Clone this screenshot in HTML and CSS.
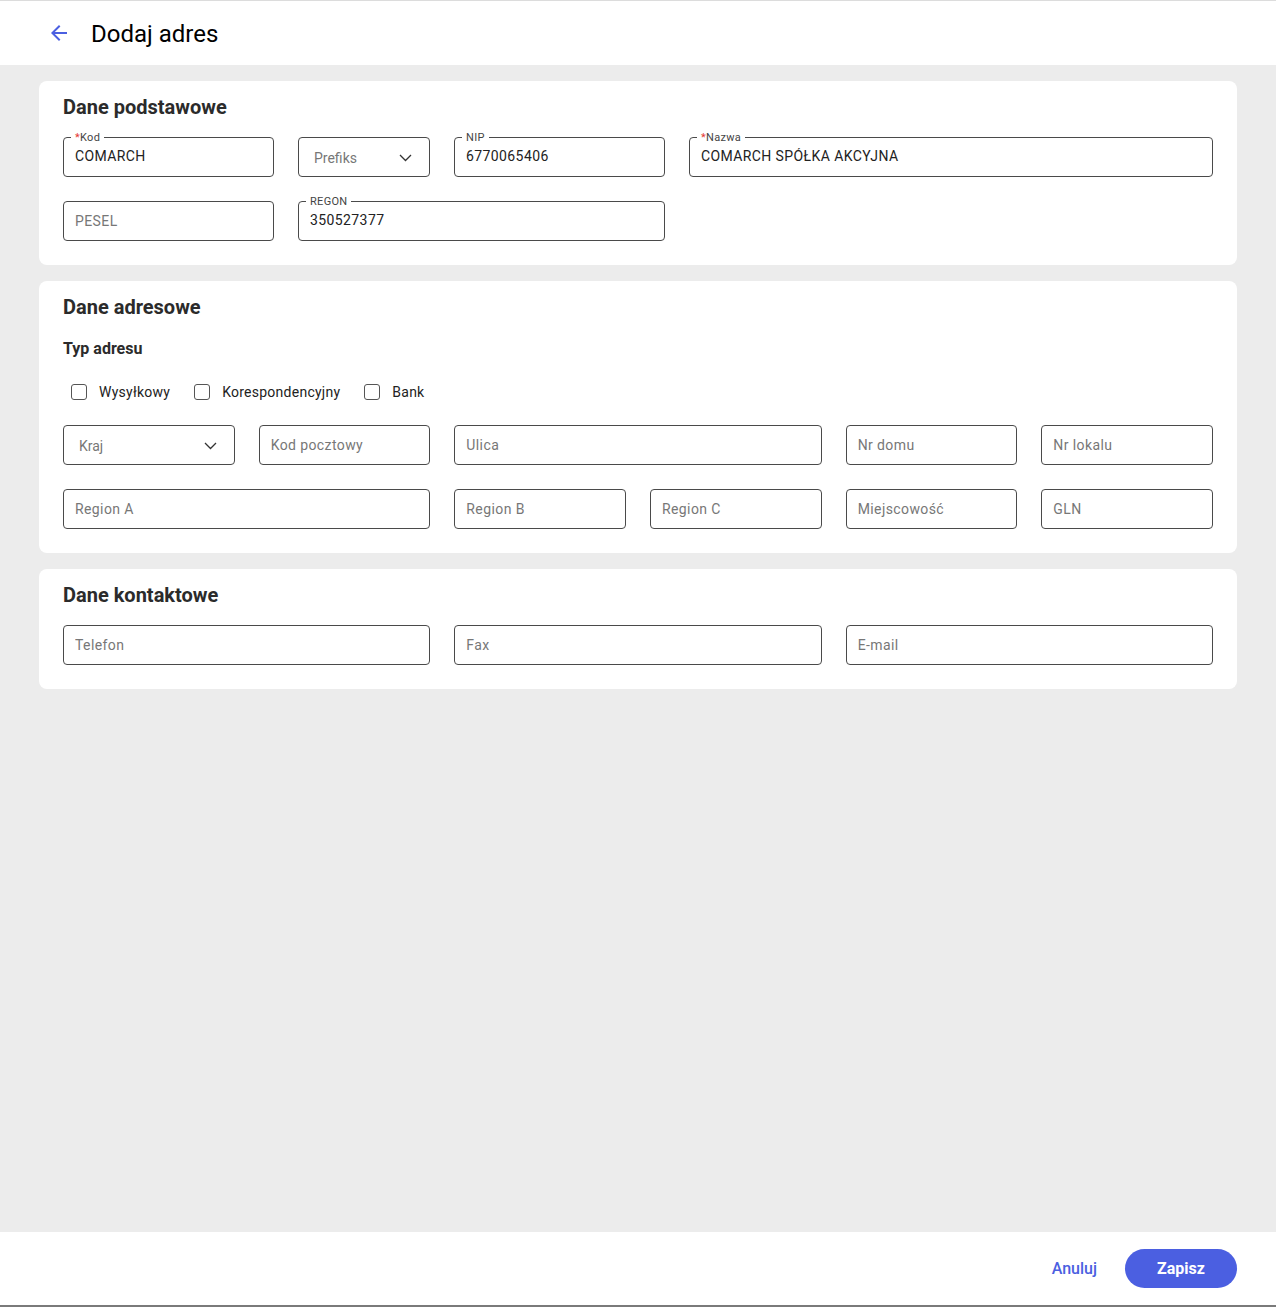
FILE: index.html
```html
<!DOCTYPE html>
<html>
<head>
  <meta charset="UTF-8">
  <title>Dodaj adres</title>
  <link rel="stylesheet" href="styles.css">
</head>
<body>
  <div class="page">
    <header class="topbar">
      <button class="back" aria-label="Wstecz">
        <svg width="24" height="24" viewBox="0 0 24 24"><path d="M20 11H7.83l5.59-5.59L12 4l-8 8 8 8 1.41-1.41L7.83 13H20v-2z" fill="#4b5fe1"/></svg>
      </button>
      <h1>Dodaj adres</h1>
    </header>

    <main class="content">
      <section class="card">
        <h2>Dane podstawowe</h2>
        <div class="grid basic">
          <div class="field">
            <span class="legend"><i>*</i>Kod</span>
            <input type="text" value="COMARCH">
          </div>
          <div class="field select">
            <span class="ph">Prefiks</span>
            <svg width="13" height="8" viewBox="0 0 13 8"><path d="M1 1l5.5 5.5L12 1" fill="none" stroke="#333" stroke-width="1.3"/></svg>
          </div>
          <div class="field">
            <span class="legend">NIP</span>
            <input type="text" value="6770065406">
          </div>
          <div class="field">
            <span class="legend"><i>*</i>Nazwa</span>
            <input type="text" value="COMARCH SPÓŁKA AKCYJNA">
          </div>
          <div class="field">
            <input type="text" placeholder="PESEL">
          </div>
          <div class="field regon">
            <span class="legend">REGON</span>
            <input type="text" value="350527377">
          </div>
        </div>
      </section>

      <section class="card">
        <h2>Dane adresowe</h2>
        <h3>Typ adresu</h3>
        <div class="checks">
          <label class="check"><span class="box"></span>Wysyłkowy</label>
          <label class="check"><span class="box"></span>Korespondencyjny</label>
          <label class="check"><span class="box"></span>Bank</label>
        </div>
        <div class="grid cols12">
          <div class="field select span2">
            <span class="ph">Kraj</span>
            <svg width="13" height="8" viewBox="0 0 13 8"><path d="M1 1l5.5 5.5L12 1" fill="none" stroke="#333" stroke-width="1.3"/></svg>
          </div>
          <div class="field span2"><input type="text" placeholder="Kod pocztowy"></div>
          <div class="field span4"><input type="text" placeholder="Ulica"></div>
          <div class="field span2"><input type="text" placeholder="Nr domu"></div>
          <div class="field span2"><input type="text" placeholder="Nr lokalu"></div>
          <div class="field span4"><input type="text" placeholder="Region A"></div>
          <div class="field span2"><input type="text" placeholder="Region B"></div>
          <div class="field span2"><input type="text" placeholder="Region C"></div>
          <div class="field span2"><input type="text" placeholder="Miejscowość"></div>
          <div class="field span2"><input type="text" placeholder="GLN"></div>
        </div>
      </section>

      <section class="card">
        <h2>Dane kontaktowe</h2>
        <div class="grid cols12">
          <div class="field span4"><input type="text" placeholder="Telefon"></div>
          <div class="field span4"><input type="text" placeholder="Fax"></div>
          <div class="field span4"><input type="text" placeholder="E-mail"></div>
        </div>
      </section>
    </main>

    <footer class="actions">
      <button class="cancel">Anuluj</button>
      <button class="save">Zapisz</button>
    </footer>
  </div>
</body>
</html>
```

FILE: styles.css
```css
* {
  box-sizing: border-box;
}
body {
  margin: 0;
  font-family: Roboto, "Noto Sans", sans-serif;
  color: #222;
}
.page {
  height: 100vh;
  display: flex;
  flex-direction: column;
  border-top: 1px solid #dcdcdc;
  border-bottom: 2px solid #7a7a7a;
}
.topbar {
  height: 64px;
  flex: none;
  display: flex;
  align-items: center;
  padding-left: 47px;
  background: #fff;
}
.back {
  border: none;
  background: none;
  padding: 0;
  width: 24px;
  height: 24px;
  cursor: pointer;
}
.topbar h1 {
  margin: 2px 0 0 20px;
  font-size: 24px;
  font-weight: 400;
  color: #000;
}
.content {
  flex: 1;
  background: #ececec;
  padding: 16px 39px;
  display: flex;
  flex-direction: column;
  gap: 16px;
}
.card {
  background: #fff;
  border-radius: 8px;
  padding: 14px 24px 24px;
}
.card h2 {
  margin: 0 0 18px;
  font-size: 20px;
  line-height: 24px;
  font-weight: 700;
  color: #2b2b2b;
}
.card h3 {
  margin: 0;
  font-size: 16px;
  line-height: 24px;
  font-weight: 700;
  color: #2b2b2b;
}
.checks {
  display: flex;
  gap: 24px;
  height: 26px;
  align-items: center;
  margin: 18px 0 20px;
  padding-left: 8px;
}
.check {
  display: flex;
  align-items: center;
  gap: 12px;
  font-size: 14px;
  letter-spacing: 0.25px;
  color: #222;
  cursor: pointer;
}
.box {
  width: 16px;
  height: 16px;
  border: 1px solid #555;
  border-radius: 3px;
}
.grid {
  display: grid;
  gap: 24px;
}
.basic {
  grid-template-columns: 211px 132px 211px 1fr;
}
.regon {
  grid-column: span 2;
}
.cols12 {
  grid-template-columns: repeat(12, 1fr);
}
.span2 {
  grid-column: span 2;
}
.span4 {
  grid-column: span 4;
}
.field {
  position: relative;
  height: 40px;
  border: 1px solid #4a4a4a;
  border-radius: 4px;
}
.field input {
  width: 100%;
  height: 100%;
  border: none;
  outline: none;
  background: transparent;
  padding: 0 11px;
  font-family: inherit;
  font-size: 14px;
  letter-spacing: 0.4px;
  color: #222;
}
.field .legend + input {
  padding-bottom: 2px;
}
.field input::placeholder {
  color: #777;
}
.legend {
  position: absolute;
  top: -6px;
  left: 7px;
  padding: 0 4px;
  background: #fff;
  font-size: 11px;
  line-height: 12px;
  letter-spacing: 0.3px;
  color: #444;
}
.legend i {
  font-style: normal;
  color: #e53935;
}
.select {
  display: flex;
  align-items: center;
  justify-content: space-between;
  padding: 2px 17px 0 15px;
}
.ph {
  font-size: 14px;
  color: #777;
}
.actions {
  height: 73px;
  flex: none;
  background: #fff;
  display: flex;
  justify-content: flex-end;
  align-items: center;
  padding-right: 39px;
}
.cancel {
  border: none;
  background: none;
  padding: 0;
  margin-right: 28px;
  font-family: inherit;
  font-size: 16px;
  font-weight: 500;
  color: #4b5fe1;
  cursor: pointer;
}
.save {
  width: 112px;
  height: 39px;
  border: none;
  border-radius: 20px;
  background: #4b5fe1;
  color: #fff;
  font-family: inherit;
  font-size: 16px;
  font-weight: 700;
  cursor: pointer;
}
```
